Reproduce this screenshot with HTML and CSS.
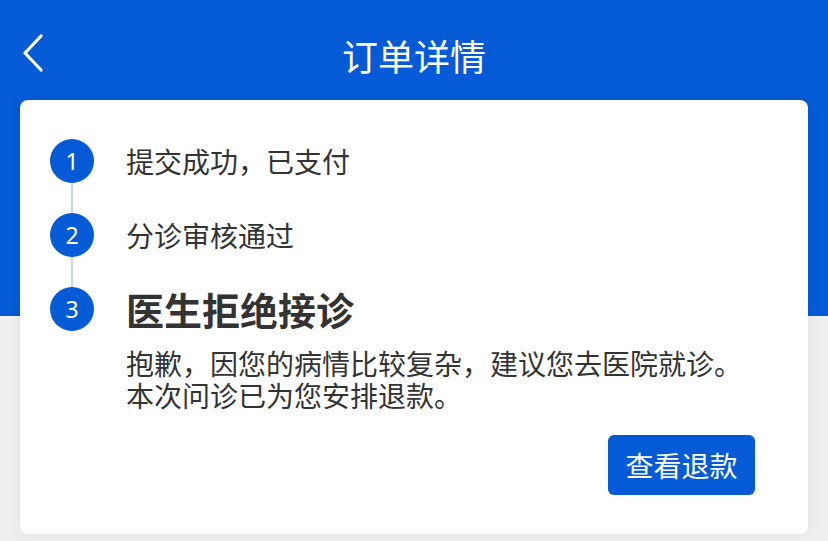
FILE: index.html
```html
<!DOCTYPE html>
<html lang="zh-CN">
<head>
    <meta charset="UTF-8">
    <meta name="viewport" content="width=device-width, initial-scale=1.0">
    <title>订单详情</title>
    <link rel="stylesheet" href="styles.css">
</head>
<body>

    <!-- Header -->
    <header class="top-bar">
        <button class="back-btn" aria-label="返回">
            <svg width="24" height="38" viewBox="0 0 24 38">
                <polyline points="20,2 4,19 20,36" fill="none" stroke="#fff" stroke-width="3.2" stroke-linecap="round" stroke-linejoin="round"/>
            </svg>
        </button>
        <h1>订单详情</h1>
    </header>

    <!-- Order progress -->
    <main class="card">
        <div class="step">
            <div class="rail">
                <span class="dot">1</span>
                <span class="line"></span>
            </div>
            <div class="step-body">
                <p class="step-title">提交成功，已支付</p>
            </div>
        </div>

        <div class="step">
            <div class="rail">
                <span class="dot">2</span>
                <span class="line"></span>
            </div>
            <div class="step-body">
                <p class="step-title">分诊审核通过</p>
            </div>
        </div>

        <div class="step current">
            <div class="rail">
                <span class="dot">3</span>
            </div>
            <div class="step-body">
                <p class="step-title">医生拒绝接诊</p>
                <p class="step-desc">抱歉，因您的病情比较复杂，建议您去医院就诊。<br>本次问诊已为您安排退款。</p>
                <div class="actions">
                    <button class="refund-btn">查看退款</button>
                </div>
            </div>
        </div>
    </main>

</body>
</html>
```

FILE: styles.css
```css
body {
    margin: 0;
    padding: 0 20px;
    min-height: 541px;
    font-family: "Noto Sans CJK SC", "Noto Sans", sans-serif;
    color: #333;
    background: linear-gradient(#055bd5 0, #055bd5 316px, #efeff1 316px);
}

.top-bar {
    position: relative;
    height: 100px;
    padding-top: 10px;
    box-sizing: border-box;
    display: flex;
    align-items: center;
    justify-content: center;
}

.top-bar h1 {
    margin: 0;
    font-size: 36px;
    font-weight: normal;
    color: #fff;
    line-height: 44px;
}

.back-btn {
    position: absolute;
    left: 1px;
    top: 34px;
    background: none;
    border: none;
    padding: 0;
    cursor: pointer;
}

.back-btn svg {
    display: block;
}

.card {
    background: #fff;
    border-radius: 8px;
    padding: 39px 53px 39px 30px;
    box-shadow: 0 0 14px rgba(0, 0, 0, 0.06);
}

.step {
    display: flex;
}

.rail {
    width: 44px;
    display: flex;
    flex-direction: column;
    align-items: center;
    margin-right: 32px;
}

.dot {
    width: 44px;
    height: 44px;
    border-radius: 50%;
    background: #055bd5;
    color: #fff;
    font-family: "Noto Sans", sans-serif;
    font-size: 23px;
    line-height: 44px;
    text-align: center;
    flex-shrink: 0;
}

.line {
    width: 2px;
    height: 30px;
    background: #c8d9eb;
}

.step-body {
    flex: 1;
}

.step-title {
    margin: 0;
    font-size: 28px;
    line-height: 44px;
}

.current .step-title {
    font-size: 38px;
    font-weight: bold;
}

.step-desc {
    margin: 16px 0 0;
    font-size: 28px;
    line-height: 32px;
}

.actions {
    display: flex;
    justify-content: flex-end;
    margin-top: 24px;
}

.refund-btn {
    width: 147px;
    height: 60px;
    border: none;
    border-radius: 6px;
    background: #055bd5;
    color: #fff;
    font-family: "Noto Sans CJK SC", sans-serif;
    font-size: 28px;
    cursor: pointer;
}
```
